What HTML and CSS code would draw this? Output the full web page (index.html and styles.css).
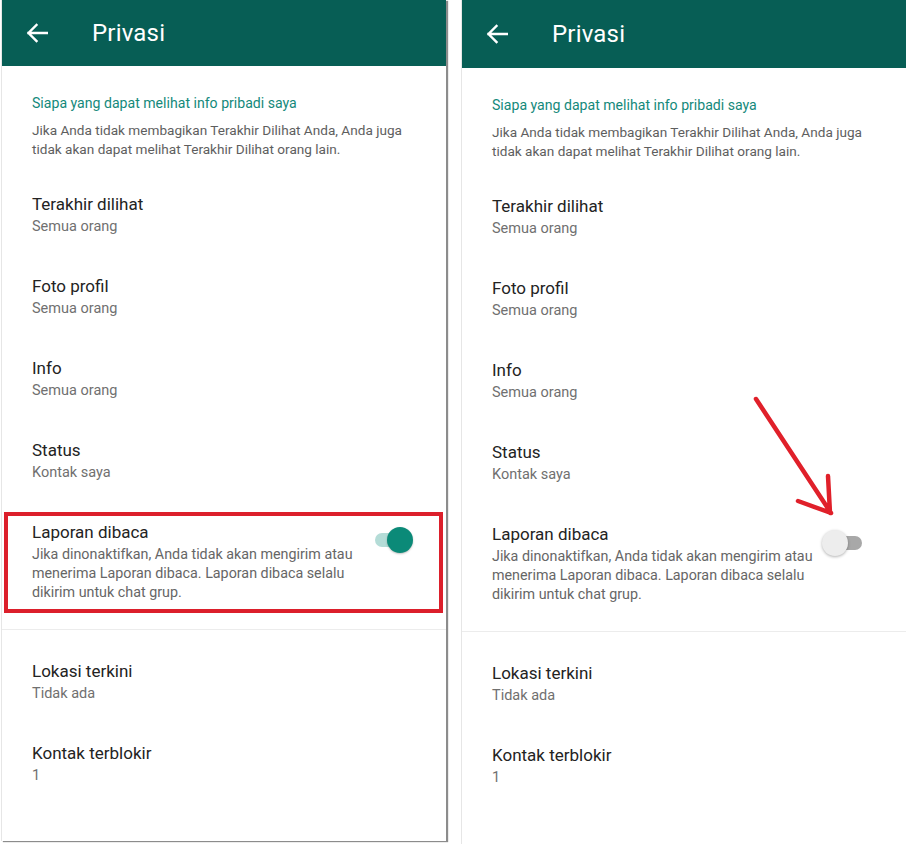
FILE: index.html
```html
<!DOCTYPE html>
<html lang="id">
<head>
<meta charset="utf-8">
<title>Privasi</title>
<link rel="stylesheet" href="styles.css">
</head>
<body>
<div class="screens">
  <section class="phone phone-left">
    <header class="appbar">
      <svg class="back" width="22" height="20" viewBox="0 0 22 20"><path d="M21 10H2.5M10.5 2L2.5 10l8 8" fill="none" stroke="#fff" stroke-width="2.4" stroke-linecap="square"/></svg>
      <h1>Privasi</h1>
    </header>
    <div class="group">
      <div class="intro">
        <p class="section-title">Siapa yang dapat melihat info pribadi saya</p>
        <p class="section-desc">Jika Anda tidak membagikan Terakhir Dilihat Anda, Anda juga tidak akan dapat melihat Terakhir Dilihat orang lain.</p>
      </div>
      <div class="item"><div class="item-text"><div class="title">Terakhir dilihat</div><div class="sub">Semua orang</div></div></div>
      <div class="item"><div class="item-text"><div class="title">Foto profil</div><div class="sub">Semua orang</div></div></div>
      <div class="item"><div class="item-text"><div class="title">Info</div><div class="sub">Semua orang</div></div></div>
      <div class="item"><div class="item-text"><div class="title">Status</div><div class="sub">Kontak saya</div></div></div>
      <div class="item item-switch highlight">
        <div class="item-text"><div class="title">Laporan dibaca</div><div class="desc">Jika dinonaktifkan, Anda tidak akan mengirim atau menerima Laporan dibaca. Laporan dibaca selalu dikirim untuk chat grup.</div></div>
        <span class="switch on"><span class="thumb"></span></span>
      </div>
    </div>
    <div class="group group-2">
      <div class="item"><div class="item-text"><div class="title">Lokasi terkini</div><div class="sub">Tidak ada</div></div></div>
      <div class="item"><div class="item-text"><div class="title">Kontak terblokir</div><div class="sub">1</div></div></div>
    </div>
  </section>

  <section class="phone phone-right">
    <header class="appbar">
      <svg class="back" width="22" height="20" viewBox="0 0 22 20"><path d="M21 10H2.5M10.5 2L2.5 10l8 8" fill="none" stroke="#fff" stroke-width="2.4" stroke-linecap="square"/></svg>
      <h1>Privasi</h1>
    </header>
    <div class="group">
      <div class="intro">
        <p class="section-title">Siapa yang dapat melihat info pribadi saya</p>
        <p class="section-desc">Jika Anda tidak membagikan Terakhir Dilihat Anda, Anda juga tidak akan dapat melihat Terakhir Dilihat orang lain.</p>
      </div>
      <div class="item"><div class="item-text"><div class="title">Terakhir dilihat</div><div class="sub">Semua orang</div></div></div>
      <div class="item"><div class="item-text"><div class="title">Foto profil</div><div class="sub">Semua orang</div></div></div>
      <div class="item"><div class="item-text"><div class="title">Info</div><div class="sub">Semua orang</div></div></div>
      <div class="item"><div class="item-text"><div class="title">Status</div><div class="sub">Kontak saya</div></div></div>
      <div class="item item-switch">
        <div class="item-text"><div class="title">Laporan dibaca</div><div class="desc">Jika dinonaktifkan, Anda tidak akan mengirim atau menerima Laporan dibaca. Laporan dibaca selalu dikirim untuk chat grup.</div></div>
        <span class="switch off"><span class="thumb"></span></span>
      </div>
    </div>
    <div class="group group-2">
      <div class="item"><div class="item-text"><div class="title">Lokasi terkini</div><div class="sub">Tidak ada</div></div></div>
      <div class="item"><div class="item-text"><div class="title">Kontak terblokir</div><div class="sub">1</div></div></div>
    </div>
    <svg class="annot-arrow" width="100" height="130" viewBox="0 0 100 130"><path d="M4 5L79 119M76 82L78 119M46 107L79 119" fill="none" stroke="#e0202a" stroke-width="4.5" stroke-linecap="round" stroke-linejoin="round"/></svg>
  </section>
</div>
</body>
</html>
```

FILE: styles.css
```css
* { box-sizing: border-box; }
html, body { margin: 0; padding: 0; background: #fff; }
body {
  width: 908px;
  height: 844px;
  overflow: hidden;
  font-family: Roboto, "Noto Sans", "Liberation Sans", sans-serif;
}
.screens {
  display: flex;
  align-items: flex-start;
  gap: 15px;
  padding-left: 1px;
}
.phone {
  position: relative;
  width: 445px;
  background: #fff;
  border-left: 1px solid #e6e6e6;
}
.phone-left {
  height: 841px;
  box-shadow: 2px 1px 1px rgba(0,0,0,0.45);
}
.phone-right {
  height: 844px;
}
.appbar {
  display: flex;
  align-items: center;
  height: 66px;
  padding-left: 24px;
  background: #075e55;
  color: #fff;
}
.phone-right .appbar { height: 68px; }
.appbar .back { flex: none; margin-top: -1px; }
.appbar h1 {
  margin: 0 0 0 44px;
  font-size: 24px;
  font-weight: 400;
  letter-spacing: 0.2px;
}
.group {
  border-bottom: 1px solid #ececec;
  padding-bottom: 8px;
}
.group-2 {
  border-bottom: none;
  padding-top: 10px;
}
.intro {
  padding: 27px 30px 14px 30px;
}
.section-title {
  margin: 0;
  font-size: 14.1px;
  line-height: 20px;
  color: #14897b;
}
.section-desc {
  margin: 8px 0 0;
  width: 390px;
  font-size: 13.6px;
  line-height: 19px;
  color: #5e5e5e;
}
.item {
  display: flex;
  align-items: flex-start;
  padding: 20px 30px 18px;
}
.item-text { flex: 1; min-width: 0; }
.title {
  font-size: 17px;
  line-height: 22px;
  color: #232323;
}
.sub {
  margin-top: 2px;
  font-size: 14.5px;
  line-height: 20px;
  color: #707070;
}
.desc {
  margin-top: 2px;
  font-size: 14.3px;
  line-height: 19px;
  color: #666;
}
.item-switch { padding-bottom: 19px; }
.switch {
  position: relative;
  flex: none;
  width: 42px;
  height: 26px;
  margin-top: 6px;
  margin-right: 3px;
}
.switch::before {
  content: "";
  position: absolute;
  left: 4px;
  right: 4px;
  top: 6px;
  height: 14px;
  border-radius: 7px;
}
.switch .thumb {
  position: absolute;
  top: 0;
  width: 26px;
  height: 26px;
  border-radius: 50%;
}
.switch.on::before { background: #b4dcd7; }
.switch.on .thumb {
  right: 0;
  background: #0b8a78;
  box-shadow: 0 1px 2px rgba(0,0,0,0.25);
}
.switch.off { width: 40px; margin-right: 14px; margin-top: 7px; }
.switch.off::before { background: #a8a8a8; left: 10px; right: 0; }
.switch.off .thumb {
  left: 0;
  background: #ededed;
  box-shadow: 0 1px 3px rgba(0,0,0,0.3);
}
.highlight { position: relative; }
.highlight::after {
  content: "";
  position: absolute;
  left: 2px;
  right: 3px;
  top: 11px;
  height: 93px;
  border: 4px solid #dc1f2b;
  pointer-events: none;
}
.annot-arrow {
  position: absolute;
  left: 290px;
  top: 394px;
}
```
